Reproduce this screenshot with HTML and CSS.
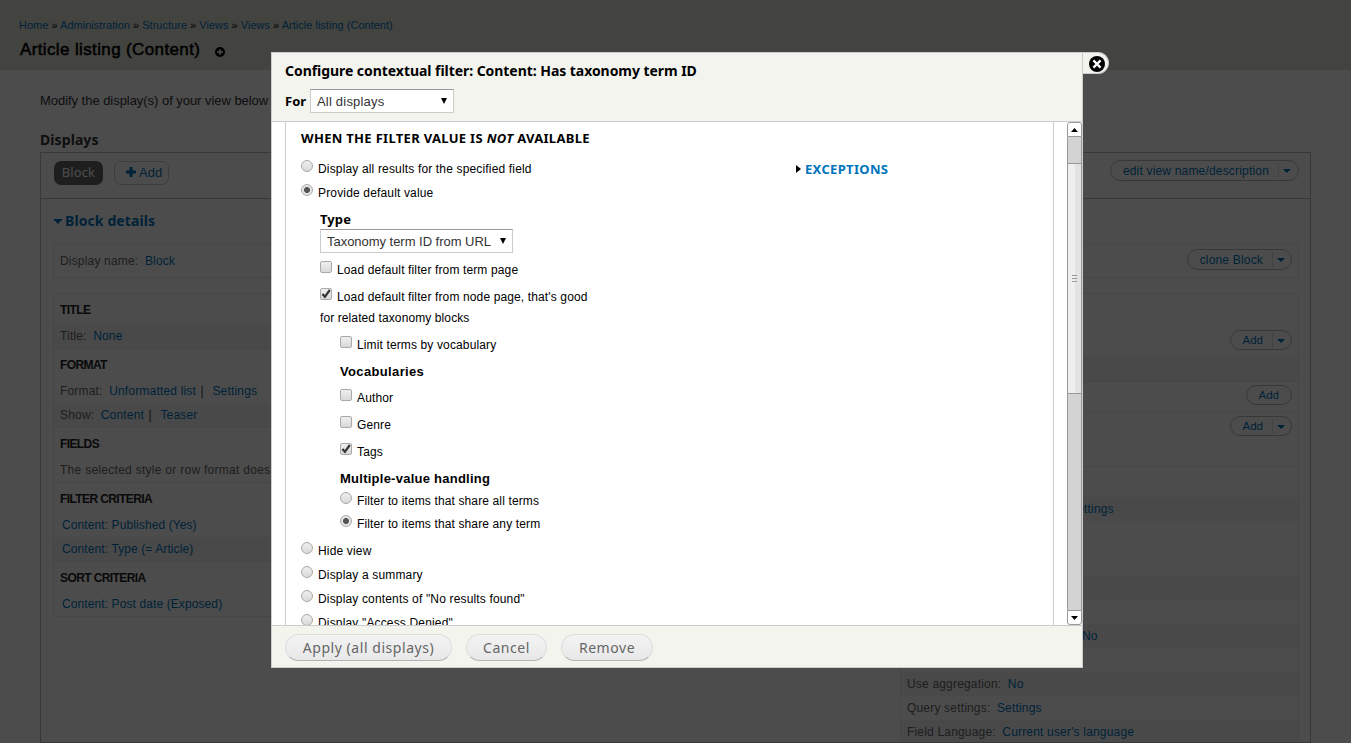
FILE: index.html
```
<!DOCTYPE html>
<html lang="en">
<head>
<meta charset="utf-8">
<title>Article listing (Content)</title>
<link rel="stylesheet" href="styles.css">
</head>
<body>
<div class="page">
  <header class="branding">
    <nav class="breadcrumb"><a>Home</a> » <a>Administration</a> » <a>Structure</a> » <a>Views</a> » <a>Views</a> » <a>Article listing (Content)</a></nav>
    <div class="title-row"><h1>Article listing (Content)</h1>
      <svg width="10" height="10" viewBox="0 0 10 10"><circle cx="5" cy="5" r="5" fill="#000"/><path d="M5 2.2v5.6M2.2 5h5.6" stroke="#e0e0d8" stroke-width="1.8"/></svg>
    </div>
  </header>
  <main class="content">
    <p class="intro">Modify the display(s) of your view below</p>
    <h2>Displays</h2>
    <div class="displays">
      <div class="tabs">
        <span class="tab active">Block</span>
        <span class="tab add"><svg width="10" height="10" viewBox="0 0 10 10"><path d="M5 0v10M0 5h10" stroke="#0074bd" stroke-width="3"/></svg>Add</span>
        <span class="pill wide">edit view name/description<i class="drop"></i></span>
      </div>
      <div class="details">
        <h3><i class="tri"></i>Block details</h3>
        <div class="box name-box"><span>Display name: <a>Block</a></span><span class="pill">clone Block<i class="drop"></i></span></div>
        <div class="columns">
          <div class="box first">
            <section><h4>TITLE</h4><div class="row odd">Title: <a>None</a></div></section>
            <section><h4>FORMAT</h4><div class="row">Format: <a>Unformatted list</a> <b>|</b> <a>Settings</a></div><div class="row odd">Show: <a>Content</a> <b>|</b> <a>Teaser</a></div></section>
            <section><h4>FIELDS</h4><div class="row message">The selected style or row format does not use fields.</div></section>
            <section><h4>FILTER CRITERIA</h4><div class="row item"><a>Content: Published (Yes)</a></div><div class="row item odd"><a>Content: Type (= Article)</a></div></section>
            <section><h4>SORT CRITERIA</h4><div class="row item"><a>Content: Post date (Exposed)</a></div></section>
          </div>
          <div class="box third">
            <section><div class="bucket top"><span class="pill">Add<i class="drop"></i></span></div><div class="row odd"></div></section>
            <section><div class="bucket single"><span class="pill">Add</span></div></section>
            <section><div class="bucket tall"><span class="pill">Add<i class="drop"></i></span></div></section>
            <div class="spacer"></div>
            <div class="row odd exposed"><a>Settings</a></div>
            <div class="spacer large"></div>
            <div class="row odd"></div>
            <div class="row"></div>
            <div class="row odd hide"><a>No</a></div>
            <div class="row"></div>
            <div class="row odd">Use aggregation: <a>No</a></div>
            <div class="row">Query settings: <a>Settings</a></div>
            <div class="row odd">Field Language: <a>Current user's language</a></div>
          </div>
        </div>
      </div>
    </div>
  </main>
</div>
<div class="overlay"></div>

<div class="modal">
  <div class="close"><svg width="16" height="16" viewBox="0 0 16 16"><circle cx="8" cy="8" r="8" fill="#000"/><path d="M4.4 4.4l7.2 7.2M11.6 4.4l-7.2 7.2" stroke="#fff" stroke-width="2.2"/></svg></div>
  <div class="modal-head">
    <div class="modal-title">Configure contextual filter: Content: Has taxonomy term ID</div>
    <div class="for"><span>For</span><div class="select all">All displays<i></i></div></div>
  </div>
  <div class="modal-body">
    <div class="fieldset">
      <div class="options">
        <div class="legend">WHEN THE FILTER VALUE IS <em>NOT</em> AVAILABLE</div>
        <div class="opt main"><i class="radio"></i><span>Display all results for the specified field</span></div>
        <div class="opt main"><i class="radio on"></i><span>Provide default value</span></div>
        <div class="sub">
          <div class="type-label">Type</div>
          <div class="select type">Taxonomy term ID from URL<i></i></div>
          <div class="opt"><i class="check"></i><span>Load default filter from term page</span></div>
          <div class="opt"><i class="check"><svg width="12" height="12" viewBox="0 0 12 12"><path d="M2.4 6l2.5 2.8L9.8 2" fill="none" stroke="#333" stroke-width="2.2"/></svg></i><span>Load default filter from node page, that's good</span></div>
          <div class="wrapped">for related taxonomy blocks</div>
          <div class="nested">
            <div class="opt"><i class="check"></i><span>Limit terms by vocabulary</span></div>
            <div class="label vocab">Vocabularies</div>
            <div class="opt author"><i class="check"></i><span>Author</span></div>
            <div class="opt"><i class="check"></i><span>Genre</span></div>
            <div class="opt"><i class="check"><svg width="12" height="12" viewBox="0 0 12 12"><path d="M2.4 6l2.5 2.8L9.8 2" fill="none" stroke="#333" stroke-width="2.2"/></svg></i><span>Tags</span></div>
            <div class="label">Multiple-value handling</div>
            <div class="opt share"><i class="radio"></i><span>Filter to items that share all terms</span></div>
            <div class="opt share any"><i class="radio on"></i><span>Filter to items that share any term</span></div>
          </div>
        </div>
        <div class="opt main hide-view"><i class="radio"></i><span>Hide view</span></div>
        <div class="opt main"><i class="radio"></i><span>Display a summary</span></div>
        <div class="opt main"><i class="radio"></i><span>Display contents of "No results found"</span></div>
        <div class="opt main"><i class="radio"></i><span>Display "Access Denied"</span></div>
      </div>
      <div class="exceptions"><i></i>EXCEPTIONS</div>
    </div>
    <div class="scrollbar">
      <div class="btn up"><svg width="7" height="4" viewBox="0 0 7 4"><path d="M0 4L3.5 0L7 4z"/></svg></div>
      <div class="track"><div class="thumb"><i></i><i></i><i></i></div></div>
      <div class="btn down"><svg width="7" height="4" viewBox="0 0 7 4"><path d="M0 0L3.5 4L7 0z"/></svg></div>
    </div>
  </div>
  <div class="modal-foot"><span class="button apply">Apply (all displays)</span><span class="button cancel">Cancel</span><span class="button remove">Remove</span></div>
</div>
</body>
</html>
```
FILE: styles.css
```
* { box-sizing: border-box; }
body { margin: 0; height: 743px; overflow: hidden; font: 12px "Liberation Sans", Arial, sans-serif; color: #000; position: relative; }
h1, h2, h3, h4, p { margin: 0; }
a { color: #0074bd; }
svg { display: block; flex: none; }

.page { height: 743px; overflow: hidden; background: #fff; white-space: nowrap; }
.branding { height: 70px; background: #e0e0d8; padding: 17px 19px 0; }
.breadcrumb { font-size: 11px; line-height: 16px; letter-spacing: .015px; }
.title-row { display: flex; align-items: center; gap: 15px; height: 34px; padding-left: 1px; }
h1 { font-size: 17px; font-weight: normal; letter-spacing: .37px; line-height: 34px; -webkit-text-stroke: .5px #000; }
.title-row svg { margin-top: 3px; }

.content { padding: 20px 40px 0; }
.intro { font-size: 13px; line-height: 22px; letter-spacing: -.04px; color: #333; }
h2 { font: bold 14px/20px "Noto Sans", sans-serif; letter-spacing: .08px; color: #333; margin-top: 18px; }
.displays { margin-top: 2px; border: 1px solid #bdbdbd; height: 591px; overflow: hidden; }
.tabs { display: flex; height: 46px; padding: 8px 11px 0 13px; border-bottom: 1px solid #bdbdbd; }
.tab { display: flex; align-items: center; height: 24px; border-radius: 7px; padding-bottom: 2px; font: 13px "Noto Sans", sans-serif; letter-spacing: .1px; }
.active { background: #666; color: #fff; width: 49px; justify-content: center; }
.add { margin-left: 11px; width: 55px; padding-left: 11px; gap: 3px; border: 1px solid #ccc; color: #0074bd; font: 13px "Liberation Sans", sans-serif; }
.pill { margin-left: auto; display: flex; align-items: center; height: 20px; border: 1px solid #bbb; border-radius: 10px; padding-left: 12px; color: #0074bd; font-size: 11.5px; letter-spacing: 0; }
.pill.wide { height: 21px; border-radius: 11px; font-size: 12px; letter-spacing: .18px; margin-top: -1px; }
.drop { width: 20px; height: 15px; margin-left: 9px; border-left: 1px solid #ddd; position: relative; }
.drop::after { content: ""; position: absolute; left: 4px; top: 6px; border: 4px solid transparent; border-top-color: #0074bd; border-bottom: 0; }
.third .drop, .name-box .drop { width: 19px; }
.details { padding: 9px 11px 0 12px; }
h3 { display: flex; align-items: center; height: 24px; font: bold 14px "Noto Sans", sans-serif; letter-spacing: .1px; color: #0074bd; }
.tri { border: 5px solid transparent; border-top-color: #0074bd; border-bottom: 0; margin: 2px 2px 0 0; }
.box { border: 1px solid #ebebeb; color: #666; letter-spacing: .18px; }
.box a { margin-left: 3px; }
.box b { font-weight: normal; color: #333; margin: 0 2px 0 1px; }
.name-box { display: flex; align-items: center; height: 34px; margin-top: 12px; padding: 0 6px 0 6px; }
.name-box .pill { font-size: 12px; height: 21px; border-radius: 11px; margin-top: -3px; letter-spacing: .18px; }
.columns { display: flex; align-items: flex-start; justify-content: space-between; margin-top: 15px; }
.first { width: 409px; overflow: hidden; }
.first section + section { border-top: 1px solid #ebebeb; }
h4 { font-size: 12px; font-weight: bold; letter-spacing: -.6px; line-height: 32px; height: 30px; padding-left: 6px; color: #222; }
.row { height: 24px; line-height: 24px; padding-left: 6px; }
.odd { background: #f5f5f5; }
.message { letter-spacing: .28px; }
.row.item a { margin-left: 2px; letter-spacing: .1px; }
.third { width: 399px; }
.third section { border-bottom: 1px solid #ebebeb; }
.bucket { display: flex; padding: 3px 6px 0 0; }
.top { height: 62px; padding-top: 36px; }
.top + .row { height: 25px; }
.single { height: 29px; }
.single .pill { padding-right: 12px; }
.tall { height: 54px; padding-top: 4px; }
.spacer { height: 30px; }
.spacer.large { height: 55px; }
.row.exposed { padding-left: 165px; }
.row.hide { padding-left: 178px; }

.overlay { position: absolute; inset: 0; background: rgba(0, 0, 0, .7); }

.modal { position: absolute; left: 271px; top: 52px; width: 812px; height: 616px; border: 1px solid #ccc; background: #fff; display: flex; flex-direction: column; white-space: nowrap; }
.close { position: absolute; left: 811px; top: -1px; width: 26px; height: 22px; padding: 3px 0 0 6px; background: #f3f4ee; border: 1px solid #ccc; border-left: 0; border-radius: 0 11px 11px 0; }
.modal-head { flex: none; height: 69px; background: #f3f4ee; border-bottom: 1px solid #ccc; padding: 8px 13px 0; }
.modal-title { font: bold 14px/20px "Noto Sans", sans-serif; letter-spacing: -.05px; }
.for { display: flex; align-items: center; margin-top: 8px; font: bold 13px "Noto Sans", sans-serif; height: 24px; }
.for span { width: 25px; }
.select { display: flex; align-items: center; justify-content: space-between; height: 24px; padding: 0 6px 0 6px; border: 1px solid #ccc; border-top-color: #999; background: #fff; color: #333; font: 13px "Liberation Sans", sans-serif; }
.select i { border: 3.5px solid transparent; border-top: 6px solid #000; border-bottom: 0; margin-top: -1px; }
.select.all { width: 144px; letter-spacing: .2px; }
.select.type { width: 193px; padding-top: 1px; letter-spacing: -.03px; }
.modal-body { flex: none; display: flex; height: 503px; overflow: hidden; padding-left: 13px; }
.fieldset { display: flex; width: 769px; height: 503px; border: solid #ccc; border-width: 0 1px; padding-left: 15px; overflow: hidden; }
.options { width: 495px; }
.legend { font: bold 13px/33px "Noto Sans", sans-serif; letter-spacing: .31px; height: 35px; }
.exceptions { display: flex; align-items: center; gap: 4px; height: 24px; margin-top: 35px; font: bold 13px "Noto Sans", sans-serif; letter-spacing: .33px; color: #0074bd; }
.exceptions i { border: 4px solid transparent; border-left: 5px solid #000; border-right: 0; }
.opt { display: flex; align-items: center; height: 21px; margin-top: 6px; gap: 5px; letter-spacing: .13px; }
.opt.main { height: 24px; margin-top: 0; letter-spacing: .16px; }
.sub .opt span { padding-top: 1px; }
.radio, .check { width: 12px; height: 12px; flex: none; margin-top: -5px; border: 1px solid #aaa; background: linear-gradient(#eee, #d9d9d9); }
.radio { border-radius: 50%; }
.main .radio { margin-top: -6px; }
.check { border-radius: 2px; }
.check svg { margin: -1px; }
.radio.on { background: radial-gradient(circle, #555 0, #555 2.6px, #e5e5e5 3.4px); }
.sub { padding: 4px 0 0 19px; }
.type-label { font: bold 13px/20px "Noto Sans", sans-serif; letter-spacing: .1px; }
.wrapped { height: 21px; line-height: 23px; letter-spacing: .1px; }
.nested { padding-left: 20px; }
.label { font-weight: bold; font-size: 13px; line-height: 21px; margin-top: 6px; letter-spacing: .25px; }
.label.vocab { letter-spacing: .35px; }
.opt.author { margin-top: 5px; }
.opt.share { margin-top: 1px; }
.opt.any { margin-top: 2px; }
.opt.hide-view { margin-top: 5px; }
.scrollbar { width: 15px; height: 503px; margin-left: 13px; display: flex; flex-direction: column; }
.btn { display: flex; align-items: center; justify-content: center; height: 15px; border: 1px solid #999; background: #fff; }
.up { border-radius: 3px 3px 0 0; }
.down { border-radius: 0 0 3px 3px; }
.track { flex: 1; border: solid #999; border-width: 0 1px; background: #d3d3d3; padding-top: 26px; }
.thumb { height: 231px; border: solid #999; border-width: 1px 0; background: linear-gradient(90deg, #efefef 54%, #e3e3e3 54%); display: flex; flex-direction: column; align-items: center; justify-content: center; gap: 2px; }
.thumb i { width: 5px; height: 1px; background: #999; }
.modal-foot { flex: none; height: 42px; border-top: 1px solid #ccc; background: #f3f4ee; display: flex; gap: 14px; padding: 8px 13px 0; }
.button { display: flex; align-items: center; justify-content: center; height: 27px; border: 1px solid #ddd; border-bottom-color: #b4b4b4; border-radius: 14px; background: linear-gradient(#f3f3f3, #e8e8e8); font: 14px "Noto Sans", sans-serif; letter-spacing: .55px; color: #666; }
.apply { width: 167px; }
.cancel { width: 81px; }
.remove { width: 92px; }
```
